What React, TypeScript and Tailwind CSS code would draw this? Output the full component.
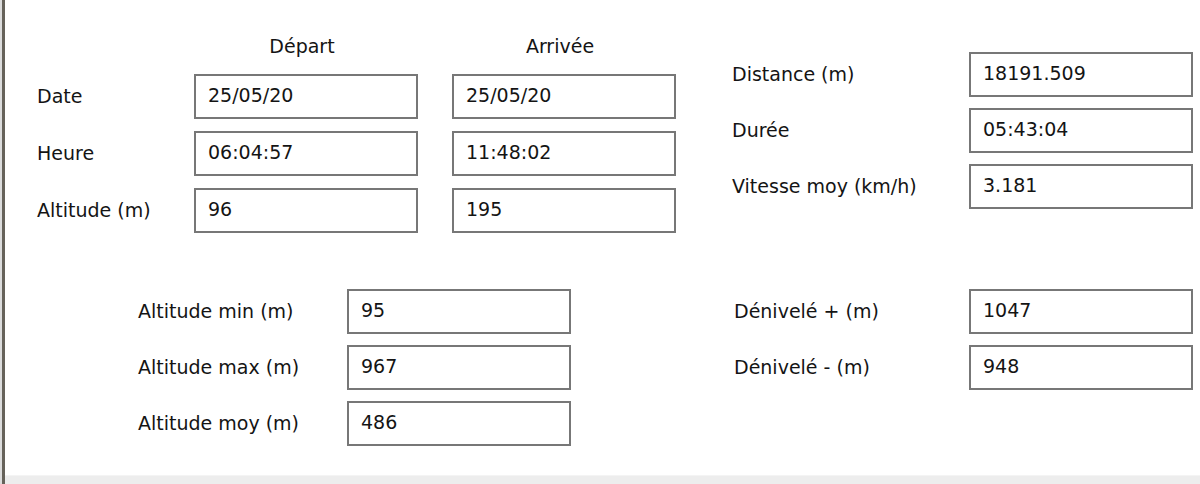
import React from 'react';

const font = { fontFamily: '"DejaVu Sans", Verdana, sans-serif' };

function Field({ value, className = '' }: { value: string; className?: string }) {
  return (
    <div
      className={`w-[224px] h-[45px] shrink-0 border-2 border-[#777777] bg-white flex items-center pl-[12px] pb-[3px] ${className}`}
    >
      {value}
    </div>
  );
}

function Row({ label, labelWidth, values }: { label: string; labelWidth: string; values: string[] }) {
  return (
    <div className="flex items-center h-[45px]">
      <div className={`${labelWidth} shrink-0`}>{label}</div>
      {values.map((v, i) => (
        <Field key={i} value={v} className={i > 0 ? 'ml-[34px]' : ''} />
      ))}
    </div>
  );
}

export default function App() {
  return (
    <div
      className="w-[1200px] h-[484px] flex bg-white text-[19px] text-[#141414] overflow-hidden"
      style={font}
    >
      {/* window edge */}
      <div className="w-[2px] bg-[#dcdcdc]" />
      <div className="w-[3px] bg-[#66625a]" />

      <div className="flex-1 flex flex-col">
        {/* Content */}
        <div className="flex-1">
          {/* Top section */}
          <div className="flex items-start">
            <div className="pl-[32px] pt-[34px]">
              <div className="flex items-center h-[24px]">
                <div className="w-[157px]" />
                <div className="w-[224px] text-center pr-[8px]">Départ</div>
                <div className="w-[224px] ml-[34px] text-center pr-[8px]">Arrivée</div>
              </div>
              <div className="mt-[16px] flex flex-col gap-[12px]">
                <Row label="Date" labelWidth="w-[157px]" values={['25/05/20', '25/05/20']} />
                <Row label="Heure" labelWidth="w-[157px]" values={['06:04:57', '11:48:02']} />
                <Row label="Altitude (m)" labelWidth="w-[157px]" values={['96', '195']} />
              </div>
            </div>

            <div className="ml-[56px] pt-[52px] flex flex-col gap-[11px]">
              <Row label="Distance (m)" labelWidth="w-[237px]" values={['18191.509']} />
              <Row label="Durée" labelWidth="w-[237px]" values={['05:43:04']} />
              <Row label="Vitesse moy (km/h)" labelWidth="w-[237px]" values={['3.181']} />
            </div>
          </div>

          {/* Bottom section */}
          <div className="flex items-start mt-[56px]">
            <div className="pl-[133px] flex flex-col gap-[11px]">
              <Row label="Altitude min (m)" labelWidth="w-[209px]" values={['95']} />
              <Row label="Altitude max (m)" labelWidth="w-[209px]" values={['967']} />
              <Row label="Altitude moy (m)" labelWidth="w-[209px]" values={['486']} />
            </div>
            <div className="ml-[163px] flex flex-col gap-[11px]">
              <Row label="Dénivelé + (m)" labelWidth="w-[235px]" values={['1047']} />
              <Row label="Dénivelé - (m)" labelWidth="w-[235px]" values={['948']} />
            </div>
          </div>
        </div>

        {/* Status strip */}
        <div className="h-[9px] bg-[#ededed] border-t border-[#f4f4f4]" />
      </div>
    </div>
  );
}
